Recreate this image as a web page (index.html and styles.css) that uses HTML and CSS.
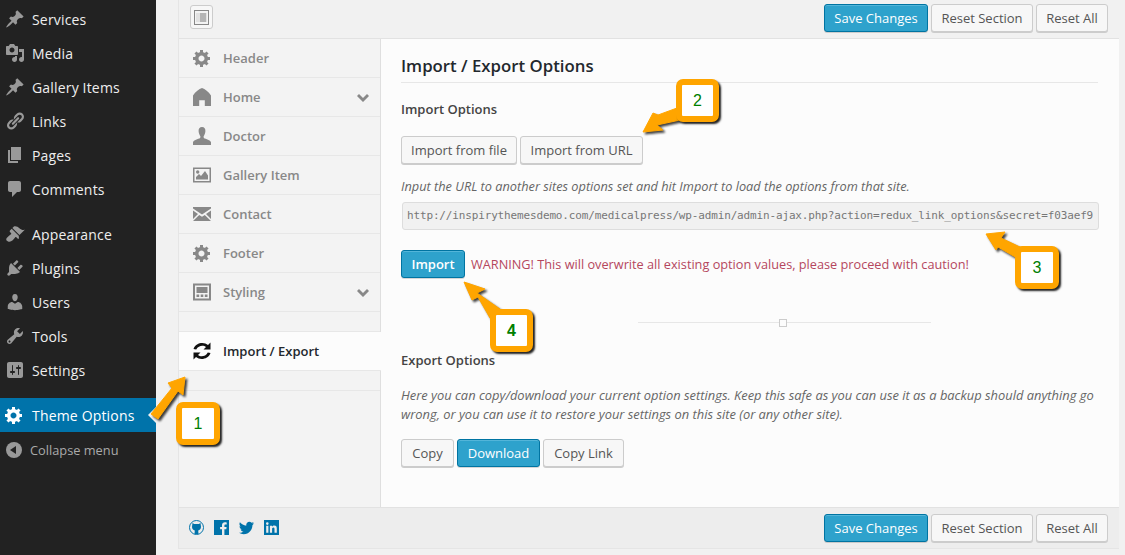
FILE: index.html
```html
<!DOCTYPE html>
<html lang="en">
<head>
<meta charset="utf-8">
<title>Theme Options</title>
<link rel="stylesheet" href="styles.css">
</head>
<body>
<svg class="defs" width="0" height="0" aria-hidden="true">
  <symbol id="i-pin" viewBox="0 0 20 20"><path d="M10.44 3.02l1.82-1.82 6.36 6.35-1.83 1.82c-1.05-.68-2.48-.57-3.41.36l-.75.75c-.92.93-1.04 2.35-.35 3.41l-1.83 1.82-2.41-2.41-2.8 2.79c-.42.42-3.38 2.71-3.8 2.29s1.86-3.39 2.28-3.81l2.79-2.79L4.1 9.36l1.83-1.82c1.05.69 2.48.57 3.4-.36l.75-.75c.93-.92 1.05-2.35.36-3.41z"/></symbol>
  <symbol id="i-media" viewBox="0 0 20 20"><path d="M13 11V4c0-.55-.45-1-1-1h-1.67L9 1H5L3.67 3H2c-.55 0-1 .45-1 1v7c0 .55.45 1 1 1h10c.55 0 1-.45 1-1zM7 4.5c1.38 0 2.5 1.12 2.5 2.5S8.38 9.5 7 9.5 4.5 8.38 4.5 7 5.62 4.5 7 4.5zM14 6h5v10.5c0 1.38-1.12 2.5-2.5 2.5S14 17.88 14 16.5s1.12-2.5 2.5-2.5c.17 0 .34.02.5.05V9h-3V6zm-4 8.05V13h2v3.5c0 1.38-1.12 2.5-2.5 2.5S7 17.88 7 16.5 8.12 14 9.5 14c.17 0 .34.02.5.05z"/></symbol>
  <symbol id="i-links" viewBox="0 0 20 20"><path d="M17.74 2.76c1.68 1.69 1.68 4.41 0 6.1l-1.53 1.52c-1.12 1.12-2.7 1.47-4.14 1.09l2.62-2.61.76-.77.76-.76c.84-.84.84-2.2 0-3.04-.84-.85-2.2-.85-3.04 0l-.77.76-3.38 3.38c-.37-1.44-.02-3.02 1.1-4.14l1.52-1.53c1.69-1.68 4.42-1.68 6.1 0zM8.59 13.43l5.34-5.34c.42-.42.42-1.1 0-1.52-.44-.43-1.13-.39-1.53 0l-5.33 5.34c-.42.42-.42 1.1 0 1.52.44.43 1.13.39 1.52 0zm-.76 2.29l4.14-4.15c.38 1.44.03 3.02-1.09 4.14l-1.52 1.53c-1.69 1.68-4.41 1.68-6.1 0-1.68-1.68-1.68-4.42 0-6.1l1.53-1.52c1.12-1.12 2.7-1.47 4.14-1.1l-4.14 4.15c-.85.84-.85 2.2 0 3.05.84.84 2.2.84 3.04 0z"/></symbol>
  <symbol id="i-page" viewBox="0 0 20 20"><path d="M6 15V2h10v13H6zm-1 1h8v2H3V5h2v11z"/></symbol>
  <symbol id="i-comment" viewBox="0 0 20 20"><path d="M5 2h9c1.1 0 2 .9 2 2v7c0 1.1-.9 2-2 2h-2l-5 5v-5H5c-1.1 0-2-.9-2-2V4c0-1.1.9-2 2-2z"/></symbol>
  <symbol id="i-brush" viewBox="0 0 20 20"><path d="M14.48 11.06L7.41 3.99l1.5-1.5c.5-.56 2.3-.47 3.51.32 1.21.8 1.43 1.28 2.91 2.1 1.18.64 2.45 1.26 4.45.85zm-.71.71L6.7 4.7 4.93 6.47c-.39.39-.39 1.02 0 1.41l1.06 1.06c.39.39.39 1.03 0 1.42-.6.6-1.43 1.11-2.21 1.69-.35.26-.7.53-1.01.84C1.43 13.71.96 15.17 1.4 16.2c.38.89 1.97 1.58 3.12 1.58.83 0 2.21-.65 3.21-1.48.26-.22.48-.46.68-.7.58-.78 1.09-1.61 1.69-2.21.39-.39 1.02-.39 1.41 0l1.06 1.06c.39.39 1.02.39 1.41 0z"/></symbol>
  <symbol id="i-plug" viewBox="0 0 20 20"><path d="M13.11 4.36L9.87 7.6 8 5.73l3.24-3.24c.35-.34 1.05-.2 1.56.32.52.51.66 1.21.31 1.55zm-8 1.77l.91-1.12 9.01 9.01-1.19.84c-.71.71-2.63 1.16-3.82 1.16H6.14L4.9 17.26c-.59.59-1.54.59-2.12 0-.59-.58-.59-1.53 0-2.12l1.24-1.24v-3.88c0-1.13.4-3.19 1.09-3.89zm7.26 3.97l3.24-3.24c.34-.35 1.04-.21 1.55.31.52.51.66 1.21.31 1.55l-3.24 3.25z"/></symbol>
  <symbol id="i-users" viewBox="0 0 20 20"><path d="M10 9.25c-2.27 0-2.73-3.44-2.73-3.44C7 4.02 7.82 2 9.97 2c2.16 0 2.98 2.02 2.71 3.81 0 0-.41 3.44-2.68 3.44zm0 2.57L12.72 10c2.39 0 4.52 2.33 4.52 4.53v2.49s-3.65 1.13-7.24 1.13c-3.65 0-7.24-1.13-7.24-1.13v-2.49c0-2.25 1.94-4.48 4.47-4.48z"/></symbol>
  <symbol id="i-tools" viewBox="0 0 20 20"><path d="M16.68 9.77c-1.34 1.34-3.3 1.67-4.95.99l-5.41 6.52c-.99.99-2.59.99-3.58 0s-.99-2.59 0-3.57l6.52-5.42c-.68-1.65-.35-3.61.99-4.95 1.28-1.28 3.12-1.62 4.72-1.06l-2.89 2.89 2.82 2.82 2.86-2.87c.53 1.58.18 3.39-1.08 4.65zM3.81 16.21c.4.39 1.04.39 1.43 0 .4-.4.4-1.04 0-1.43-.39-.4-1.03-.4-1.43 0-.39.39-.39 1.03 0 1.43z"/></symbol>
  <symbol id="i-settings" viewBox="0 0 20 20"><path d="M18 16V4c0-1.1-.9-2-2-2H4c-1.1 0-2 .9-2 2v12c0 1.1.9 2 2 2h12c1.1 0 2-.9 2-2zM8 11h1c.55 0 1 .45 1 1s-.45 1-1 1H8v1.5c0 .28-.22.5-.5.5s-.5-.22-.5-.5V13H6c-.55 0-1-.45-1-1s.45-1 1-1h1V5.5c0-.28.22-.5.5-.5s.5.22.5.5V11zm5-2h-1c-.55 0-1-.45-1-1s.45-1 1-1h1V5.5c0-.28.22-.5.5-.5s.5.22.5.5V7h1c.55 0 1 .45 1 1s-.45 1-1 1h-1v5.5c0 .28-.22.5-.5.5s-.5-.22-.5-.5V9z"/></symbol>
  <symbol id="i-gear" viewBox="0 0 20 20"><path d="M18 12h-2.18c-.17.7-.44 1.35-.81 1.93l1.54 1.54-2.1 2.1-1.54-1.54c-.58.36-1.23.63-1.91.79V19H8v-2.18c-.68-.16-1.33-.43-1.91-.79l-1.54 1.54-2.12-2.12 1.54-1.54c-.36-.58-.63-1.23-.79-1.91H1V9.03h2.17c.16-.7.44-1.35.8-1.94L2.43 5.55l2.1-2.1 1.54 1.54c.58-.37 1.24-.64 1.93-.81V2h3v2.18c.68.16 1.33.43 1.91.79l1.54-1.54 2.12 2.12-1.54 1.54c.36.59.64 1.24.8 1.94H18V12zm-8.5 1.5c1.66 0 3-1.34 3-3s-1.34-3-3-3-3 1.34-3 3 1.34 3 3 3z"/></symbol>
  <symbol id="i-home" viewBox="0 0 18 18"><path d="M9 0C12 1 15.5 3.6 18 7.5V18H11.8V12.2H6.2V18H0V7.5C2.5 3.6 6 1 9 0z"/></symbol>
  <symbol id="i-person" viewBox="0 0 18 18"><path d="M9 0C6.6 0 5.4 1.8 5.6 4.2 5.8 6.6 6.8 8.4 7.4 9.2L7.2 11C5 12.2 0.6 13 0 15.2V18H18V15.2C17.4 13 13 12.2 10.8 11L10.6 9.2C11.2 8.4 12.2 6.6 12.4 4.2 12.6 1.8 11.4 0 9 0z"/></symbol>
  <symbol id="i-image" viewBox="0 0 18 15"><path fill-rule="evenodd" d="M0 0H18V15H0zM1.5 1.5V13.5H16.5V1.5zM3 12V9.5L6 6.5 8 8.5 12 3.5 15 8V12zM3 4.5a1.7 1.7 0 1 0 3.4 0a1.7 1.7 0 1 0-3.4 0z"/></symbol>
  <symbol id="i-mail" viewBox="0 0 18 14"><path d="M0 0H18V1.5L9 7.6 0 1.5zM0 3.6L5 7 0 12zM18 3.6L13 7 18 12zM6.2 7.9L9 9.8 11.8 7.9 18 14H0z"/></symbol>
  <symbol id="i-layout" viewBox="0 0 18 17"><path fill-rule="evenodd" d="M0 0H18V17H0zM2 2V15H16V2zM3.5 3.5H14.5V9.5H3.5zM3.5 11H6.2V13.5H3.5zM7.7 11H10.3V13.5H7.7zM11.8 11H14.5V13.5H11.8z"/></symbol>
  <symbol id="i-refresh" viewBox="0 0 18 18"><path d="M17.5 0.5V7.5H10.5L13 5C10.5 2.8 5.5 3.2 3.2 7.5L0.5 7C2.8 0.5 11 -0.5 15 3zM0.5 17.5V10.5H7.5L5 13C7.5 15.2 12.5 14.8 14.8 10.5L17.5 11C15.2 17.5 7 18.5 3 15z"/></symbol>
  <symbol id="i-chev" viewBox="0 0 12 8"><path d="M0 2L2 0 6 4 10 0 12 2 6 8z"/></symbol>
</svg>

<div class="page">
  <nav class="menu">
    <ul class="menu-group">
      <li class="menu-item"><svg class="menu-icon"><use href="#i-pin"/></svg>Services</li>
      <li class="menu-item"><svg class="menu-icon"><use href="#i-media"/></svg>Media</li>
      <li class="menu-item"><svg class="menu-icon"><use href="#i-pin"/></svg>Gallery Items</li>
      <li class="menu-item"><svg class="menu-icon"><use href="#i-links"/></svg>Links</li>
      <li class="menu-item"><svg class="menu-icon"><use href="#i-page"/></svg>Pages</li>
      <li class="menu-item"><svg class="menu-icon"><use href="#i-comment"/></svg>Comments</li>
    </ul>
    <ul class="menu-group">
      <li class="menu-item"><svg class="menu-icon"><use href="#i-brush"/></svg>Appearance</li>
      <li class="menu-item"><svg class="menu-icon"><use href="#i-plug"/></svg>Plugins</li>
      <li class="menu-item"><svg class="menu-icon"><use href="#i-users"/></svg>Users</li>
      <li class="menu-item"><svg class="menu-icon"><use href="#i-tools"/></svg>Tools</li>
      <li class="menu-item"><svg class="menu-icon"><use href="#i-settings"/></svg>Settings</li>
    </ul>
    <ul class="menu-group">
      <li class="menu-item is-current"><svg class="menu-icon"><use href="#i-gear"/></svg>Theme Options<span class="current-notch"></span></li>
      <li class="menu-collapse"><span class="collapse-dot"><span class="collapse-tri"></span></span>Collapse menu</li>
    </ul>
  </nav>

  <main class="panel">
    <header class="bar bar-top">
      <button class="layout-btn" aria-label="Toggle layout"><span class="layout-glyph"><span></span></span></button>
      <div class="bar-actions">
        <button class="btn btn-primary btn-save">Save Changes</button>
        <button class="btn btn-section">Reset Section</button>
        <button class="btn btn-all">Reset All</button>
      </div>
    </header>

    <div class="body">
      <ul class="tabs">
        <li class="tab"><svg class="tab-icon tab-icon-gear"><use href="#i-gear"/></svg>Header</li>
        <li class="tab"><svg class="tab-icon"><use href="#i-home"/></svg>Home<svg class="chev"><use href="#i-chev"/></svg></li>
        <li class="tab"><svg class="tab-icon"><use href="#i-person"/></svg>Doctor</li>
        <li class="tab"><svg class="tab-icon"><use href="#i-image"/></svg>Gallery Item</li>
        <li class="tab"><svg class="tab-icon"><use href="#i-mail"/></svg>Contact</li>
        <li class="tab"><svg class="tab-icon tab-icon-gear"><use href="#i-gear"/></svg>Footer</li>
        <li class="tab"><svg class="tab-icon"><use href="#i-layout"/></svg>Styling<svg class="chev"><use href="#i-chev"/></svg></li>
        <li class="tab-spacer"></li>
        <li class="tab tab-active"><svg class="tab-icon"><use href="#i-refresh"/></svg>Import / Export</li>
        <li class="tab-strip"></li>
      </ul>

      <section class="content">
        <h2 class="title">Import / Export Options</h2>
        <h3 class="subhead subhead-import">Import Options</h3>
        <div class="btn-row">
          <button class="btn btn-file">Import from file</button>
          <button class="btn btn-url">Import from URL</button>
        </div>
        <p class="hint">Input the URL to another sites options set and hit Import to load the options from that site.</p>
        <div class="url-field">http://inspirythemesdemo.com/medicalpress/wp-admin/admin-ajax.php?action=redux_link_options&amp;secret=f03aef9</div>
        <div class="import-row">
          <button class="btn btn-primary btn-import">Import</button>
          <span class="warning">WARNING! This will overwrite all existing option values, please proceed with caution!</span>
        </div>
        <div class="divider"><span class="divider-box"></span></div>
        <h3 class="subhead subhead-export">Export Options</h3>
        <p class="export-text">Here you can copy/download your current option settings. Keep this safe as you can use it as a backup should anything go wrong, or you can use it to restore your settings on this site (or any other site).</p>
        <div class="btn-row">
          <button class="btn btn-copy">Copy</button>
          <button class="btn btn-primary btn-download">Download</button>
          <button class="btn btn-link">Copy Link</button>
        </div>
      </section>
    </div>

    <footer class="bar bar-bottom">
      <div class="socials">
        <svg class="social" viewBox="0 0 15 15"><circle cx="7.5" cy="7.5" r="7" fill="none" stroke="#0073aa" stroke-width="1"/><path fill="#0073aa" d="M3.5 3L5.2 4H9.8L11.5 3 12 6.8C12 9 10.8 10.2 9.2 10.5L9.5 14H5.5L5.8 10.5C4.2 10.2 3 9 3 6.8z"/></svg>
        <svg class="social" viewBox="0 0 15 15"><path fill="#0073aa" d="M0 0H15V15H10.4V9.3H12.3L12.6 7H10.4V5.6C10.4 4.9 10.6 4.5 11.5 4.5H12.7V2.4C12.2 2.3 11.6 2.3 10.9 2.3 9.2 2.3 8 3.3 8 5.3V7H6.1V9.3H8V15H0z"/></svg>
        <svg class="social" viewBox="0 0 16 15"><path fill="#0073aa" d="M16 3C15.4 3.3 14.8 3.4 14.1 3.5 14.8 3.1 15.3 2.4 15.6 1.6 14.9 2 14.2 2.3 13.4 2.5 12.8 1.8 11.9 1.4 11 1.4 9.2 1.4 7.7 2.9 7.7 4.7 7.7 5 7.7 5.2 7.8 5.5 5 5.3 2.6 4 1 2 .7 2.5.5 3.1.5 3.7.5 4.9 1.1 5.9 2 6.5 1.5 6.5 1 6.3.5 6.1V6.1C.5 7.7 1.7 9.1 3.2 9.4 2.9 9.5 2.6 9.5 2.3 9.5 2.1 9.5 1.9 9.5 1.7 9.5 2.1 10.8 3.3 11.8 4.8 11.8 3.7 12.7 2.2 13.2.7 13.2.5 13.2.2 13.2 0 13.2 1.5 14.1 3.2 14.7 5 14.7 11 14.7 14.3 9.7 14.3 5.4V5C15 4.5 15.5 3.8 16 3z"/></svg>
        <svg class="social" viewBox="0 0 15 15"><path fill="#0073aa" fill-rule="evenodd" d="M0 0H15V15H0zM2.2 5.8V12.8H4.4V5.8zM3.3 2.3A1.3 1.3 0 1 0 3.3 4.9A1.3 1.3 0 1 0 3.3 2.3zM5.9 5.8V12.8H8.1V9.2C8.1 8.2 8.4 7.4 9.4 7.4 10.4 7.4 10.5 8.3 10.5 9.2V12.8H12.8V8.8C12.8 6.8 12.3 5.6 10.2 5.6 9.1 5.6 8.5 6.2 8.1 6.8V5.8z"/></svg>
      </div>
      <div class="bar-actions">
        <button class="btn btn-primary btn-save">Save Changes</button>
        <button class="btn btn-section">Reset Section</button>
        <button class="btn btn-all">Reset All</button>
      </div>
    </footer>
  </main>
</div>

<svg class="arrows" viewBox="0 0 1125 555" aria-hidden="true">
  <polygon points="185,377 183,395 178,391 158,419 151,414 172,388 168,383"/>
  <polygon points="643,132 663,130 657,125 680,120 677,108 658,115 653,113"/>
  <polygon points="986,234 1005,232 1001,238 1022,248 1017,258 998,247 996,250"/>
  <polygon points="464,282 485,289 477,293 500,309 490,318 478,297 472,300"/>
</svg>
<div class="callout callout-1">1</div>
<div class="callout callout-2">2</div>
<div class="callout callout-3">3</div>
<div class="callout callout-4">4</div>
</body>
</html>
```
FILE: styles.css
```css
* { box-sizing: border-box; }
html, body { margin: 0; height: 555px; overflow: hidden; }
body { background: #f1f1f1; font-family: "Open Sans", sans-serif; font-size: 13px; color: #444; position: relative; }
ul { list-style: none; margin: 0; padding: 0; }
.defs { position: absolute; }

.page { display: flex; height: 555px; }

/* WordPress admin menu */
.menu { width: 156px; flex: none; background: #222; padding-top: 2px; display: flex; flex-direction: column; gap: 11px; }
.menu-item { height: 34px; display: flex; align-items: center; color: #eee; font-size: 14px; letter-spacing: .17px; position: relative; }
.menu-icon { width: 20px; height: 20px; margin: 0 7px 0 5px; fill: #999; flex: none; }
.is-current { background: #0073aa; color: #fff; }
.is-current .menu-icon { fill: #fff; margin-left: 4px; margin-right: 8px; }
.current-notch { position: absolute; right: 0; top: 9px; border: 8px solid transparent; border-right-color: #f1f1f1; border-left: 0; }
.menu-collapse { height: 36px; display: flex; align-items: center; color: #aaa; font-size: 12.8px; padding-left: 6px; }
.collapse-dot { width: 16px; height: 16px; border-radius: 50%; background: #999; margin-right: 8px; display: flex; align-items: center; justify-content: center; }
.collapse-tri { border: 4px solid transparent; border-right: 6px solid #222; border-left: 0; margin-left: -2px; }

/* Options panel */
.panel { width: 941px; margin-left: 22px; height: 549px; display: flex; flex-direction: column; border: solid #e5e5e5; border-width: 0 0 1px 1px; flex: none; }
.bar { display: flex; justify-content: space-between; flex: none; background: #f1f1f1; }
.bar-top { height: 39px; padding: 4px 11px 0 11px; border-bottom: 1px solid #e2e2e2; }
.bar-bottom { height: 41px; padding: 6px 11px 0 10px; background: #ededed; border-top: 1px solid #e2e2e2; }
.bar-actions { display: flex; gap: 3px; }

.btn { height: 28px; padding: 0; font: 13px/26px "Open Sans", sans-serif; color: #555; background: #f7f7f7; border: 1px solid #ccc; border-radius: 3px; box-shadow: 0 1px 0 #ccc; }
.btn-primary { background: #2ea2cc; border-color: #0074a2; color: #fff; box-shadow: inset 0 1px 0 rgba(120,200,230,.5), 0 1px 0 rgba(0,0,0,.15); }
.btn-save { width: 104px; }
.btn-section { width: 102px; }
.btn-all { width: 72px; }
.btn-file { width: 116px; }
.btn-url { width: 123px; }
.btn-import { width: 64px; flex: none; font-weight: 600; }
.btn-copy { width: 53px; }
.btn-download { width: 83px; }
.btn-link { width: 81px; }

.layout-btn { width: 23px; height: 24px; margin-top: 1px; padding: 0; background: #f7f7f7; border: 1px solid #ccc; border-radius: 3px; display: flex; align-items: center; justify-content: center; }
.layout-glyph { width: 15px; height: 15px; border: 1px solid #888; background: #f4f4f4; padding: 2px 1px; display: block; }
.layout-glyph span { display: block; width: 100%; height: 100%; border-left: 4px solid #e2e2e2; border-right: 1px solid #e2e2e2; background: #b5b5b5; }

.body { flex: 1; display: flex; min-height: 0; background: #fcfcfc; }

/* Section tabs */
.tabs { width: 202px; flex: none; background: #f3f3f3; border-right: 1px solid #dfdfdf; }
.tab { height: 39px; display: flex; align-items: center; position: relative; padding-left: 14px; color: #888; font-weight: 600; font-size: 13px; border-bottom: 1px solid #e7e7e7; }
.tab-icon { width: 18px; height: 18px; fill: #888; margin-right: 12px; flex: none; }
.tab-icon-gear { width: 20px; height: 20px; margin-left: -1px; margin-right: 11px; }
.chev { width: 12px; height: 8px; fill: #888; position: absolute; right: 11px; top: 16px; }
.tab-spacer { height: 20px; border-bottom: 1px solid #e7e7e7; }
.tab-active { width: 202px; background: #fcfcfc; color: #23282d; }
.tab-active .tab-icon { fill: #111; }
.tab-strip { height: 20px; border-bottom: 1px solid #e7e7e7; }

/* Right pane */
.content { flex: 1; padding: 16px 21px 0 20px; min-width: 0; }
.title { margin: 0; height: 28px; font-size: 16.8px; line-height: 22px; font-weight: 600; color: #23282d; border-bottom: 1px solid #e7e7e7; }
.subhead { margin: 0; font-size: 13px; line-height: 18px; font-weight: 600; color: #444; }
.subhead-import { margin-top: 17px; margin-bottom: 18px; }
.subhead-export { margin-top: 28px; }
.btn-row { display: flex; gap: 3px; }
.hint { margin: 13px 0 7px; font-size: 12.75px; line-height: 18px; font-style: italic; color: #666; }
.url-field { height: 28px; margin-left: 1px; margin-right: -1px; padding: 0 4px; font: 11px/26px "DejaVu Sans Mono", monospace; letter-spacing: -.15px; color: #777; background: #f1f1f1; border: 1px solid #ddd; border-radius: 3px; white-space: nowrap; overflow: hidden; }
.import-row { display: flex; align-items: center; gap: 6px; margin-top: 20px; }
.warning { color: #b5475e; font-size: 12.73px; }
.divider { width: 293px; height: 1px; margin: 44px 0 0 237px; background: #e7e7e7; display: flex; justify-content: center; align-items: center; }
.divider-box { width: 8px; height: 8px; margin-right: 3px; border: 1px solid #ccc; background: #fcfcfc; }
.export-text { margin: 17px 0 15px; font-size: 12.9px; line-height: 19px; font-style: italic; color: #666; }

.socials { display: flex; gap: 10px; margin-top: 6px; height: 15px; }
.social { width: 15px; height: 15px; flex: none; }

/* Tutorial annotations */
.arrows { position: absolute; left: 0; top: 0; width: 1125px; height: 555px; pointer-events: none; fill: #ffa500; stroke: #ffa500; stroke-width: 1; stroke-linejoin: round; filter: drop-shadow(2px 2px 1px rgba(0,0,0,.75)); }
.callout { position: absolute; width: 43px; height: 43px; display: flex; align-items: center; justify-content: center; background: #fff; border: 6px solid #ffa500; border-radius: 7px; color: #008000; font: 16px "Liberation Sans", sans-serif; box-shadow: 2px 2px 2px #222; }
.callout-1 { left: 176px; top: 402px; width: 44px; }
.callout-2 { left: 676px; top: 79px; }
.callout-3 { left: 1015px; top: 246px; width: 44px; }
.callout-4 { left: 490px; top: 309px; font-weight: 700; }
```
